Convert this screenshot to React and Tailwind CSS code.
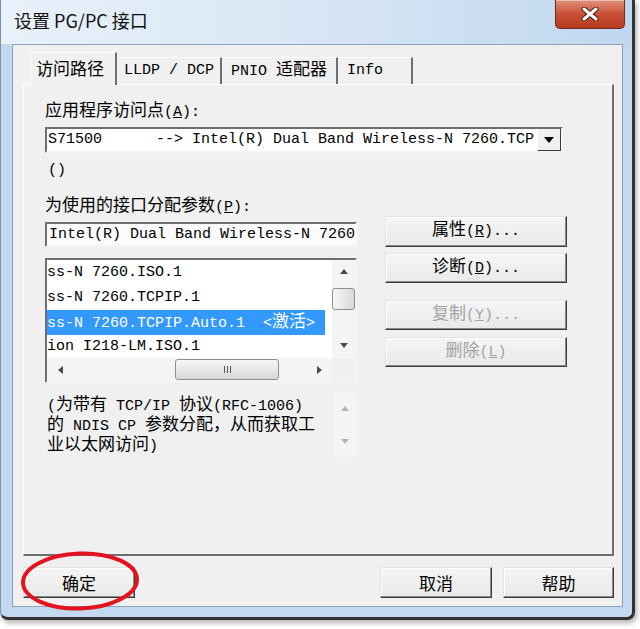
import React from "react";

const MONO = "font-['Liberation_Mono','Noto_Sans_CJK_SC',monospace]";
const CJKF = "font-['Noto_Sans_CJK_SC',sans-serif]";

function M({ s }) {
  const parts = s.split(/([\u2E80-\u9FFF\u3000-\u303F\uFF00-\uFFEF]+)/);
  return (
    <span className="whitespace-pre">
      {parts.map((p, i) =>
        i % 2 ? (
          <span key={i} className="text-[17px]">
            {p}
          </span>
        ) : (
          <span key={i}>{p}</span>
        )
      )}
    </span>
  );
}

const Up = ({ c = "#4a4a4a" }) => (
  <svg width="8" height="5" viewBox="0 0 8 5">
    <path d="M0 5 L4 0 L8 5Z" fill={c} />
  </svg>
);
const Down = ({ c = "#4a4a4a" }) => (
  <svg width="8" height="5" viewBox="0 0 8 5">
    <path d="M0 0 L8 0 L4 5Z" fill={c} />
  </svg>
);
const Left = ({ c = "#4a4a4a" }) => (
  <svg width="5" height="8" viewBox="0 0 5 8">
    <path d="M5 0 L0 4 L5 8Z" fill={c} />
  </svg>
);
const Right = ({ c = "#4a4a4a" }) => (
  <svg width="5" height="8" viewBox="0 0 5 8">
    <path d="M0 0 L5 4 L0 8Z" fill={c} />
  </svg>
);

function Btn({ children, className = "", dim = false }) {
  return (
    <div
      className={
        "flex items-center justify-center border border-t-[#e2e2e2] border-l-[#e2e2e2] border-r-[#3c3c3c] border-b-[#3c3c3c] shadow-[inset_-1px_-1px_0_#8a8a8a,inset_1px_1px_0_#ffffff] bg-gradient-to-b from-[#f5f5f5] to-[#e9e9e9] " +
        (dim ? "text-[#a3a3a3] " : "text-black ") +
        className
      }
    >
      {children}
    </div>
  );
}

export default function App() {
  return (
    <div className="w-[640px] h-[629px] bg-white relative overflow-hidden">
      <div className="w-[635px] h-[620px] flex flex-col bg-[#c3d9f0] border-l border-l-[#7f91a5] border-r-[3px] border-b-[3px] border-r-[#333333] border-b-[#333333] rounded-b-[8px] shadow-[2px_3px_5px_rgba(0,0,0,0.3)]">
        {/* Title bar */}
        <div className="h-[44px] flex items-start bg-gradient-to-r from-[#e9f1fa] via-[#d7e6f5] to-[#c1d7ef]">
          <div className={"pl-[13px] pt-[8px] text-[18px] leading-[24px] text-[#111] " + CJKF}>
            设置 PG/PC 接口
          </div>
          <div className="ml-auto mr-[7px] w-[70px] h-[29px] rounded-b-[5px] border border-t-0 border-[#6b2b1d] bg-gradient-to-b from-[#e0937e] via-[#c84f33] to-[#b83a20] shadow-[inset_0_1px_0_rgba(255,255,255,0.4)] flex items-center justify-center">
            <svg width="18" height="14" viewBox="0 0 18 14">
              <path d="M3 2 L15 12 M15 2 L3 12" stroke="#4b1a10" strokeWidth="5" strokeLinecap="round" />
              <path d="M3 2 L15 12 M15 2 L3 12" stroke="#ffffff" strokeWidth="3" strokeLinecap="round" />
            </svg>
          </div>
        </div>

        {/* Client */}
        <div className="h-[563px] ml-[11px] mr-[9px] border border-[#8ea2b7] bg-[#f0f0f0] flex flex-col">
          {/* Tab control */}
          <div className="mt-[7px] ml-[10px] mr-[8px] flex flex-col">
            <div className="h-[32px] pl-[7px] flex items-end">
              <div
                className={
                  "relative z-10 -mb-px w-[87px] h-[33px] bg-[#f0f0f0] border-t border-l border-t-white border-l-white border-r-2 border-r-[#6e6e6e] flex items-center pl-[5px] pb-[2px] text-[17px] text-black " +
                  CJKF
                }
              >
                访问路径
              </div>
              <div className={"w-[105px] h-[27px] border-t border-t-[#fafafa] border-r-2 border-r-[#6e6e6e] flex items-center pl-[7px] text-[15px] text-black " + MONO}>
                <span className="whitespace-pre">LLDP / DCP</span>
              </div>
              <div className={"w-[116px] h-[27px] border-t border-t-[#fafafa] border-r-2 border-r-[#6e6e6e] flex items-center pl-[9px] text-[15px] text-black " + MONO}>
                <M s="PNIO 适配器" />
              </div>
              <div className={"w-[75px] h-[27px] border-t border-t-[#fafafa] border-r-2 border-r-[#6e6e6e] flex items-center pl-[9px] text-[15px] text-black " + MONO}>
                Info
              </div>
            </div>

            {/* Panel */}
            <div className={"h-[472px] border-t border-l border-t-white border-l-white border-r-2 border-b-2 border-r-[#6e6e6e] border-b-[#6e6e6e] pl-[21px] pt-[17px] text-[15px] text-black flex flex-col " + MONO}>
              <div className="h-[20px] leading-[20px]">
                <M s="应用程序访问点" />(<u>A</u>):
              </div>
              {/* combo */}
              <div className="mt-[5px] w-[518px] h-[26px] border-2 border-t-[#6e6e6e] border-l-[#6e6e6e] border-r-[#f6f6f6] border-b-[#f6f6f6] bg-white flex">
                <div className="flex-1 pl-[1px] leading-[22px] whitespace-pre overflow-hidden">
                  {"S71500      --> Intel(R) Dual Band Wireless-N 7260.TCP"}
                </div>
                <div className="w-[24px] h-[22px] bg-[#f0f0f0] border-l border-l-white border-r border-b border-r-[#3c3c3c] border-b-[#3c3c3c] flex items-center justify-center">
                  <svg width="10" height="6" viewBox="0 0 10 6">
                    <path d="M0 0 L10 0 L5 6Z" fill="#000" />
                  </svg>
                </div>
              </div>
              <div className="mt-[8px] h-[20px] leading-[20px] pl-[3px]">()</div>

              <div className="mt-[16px] flex">
                {/* left column */}
                <div className="w-[312px] flex flex-col">
                  <div className="h-[20px] leading-[20px]">
                    <M s="为使用的接口分配参数" />(<u>P</u>):
                  </div>
                  <div className="mt-[5px] w-[312px] h-[25px] border-2 border-t-[#6e6e6e] border-l-[#6e6e6e] border-r-[#fdfdfd] border-b-[#f3f3f3] bg-[#fbfbfb] pl-[2px] leading-[21px] whitespace-pre overflow-hidden">
                    Intel(R) Dual Band Wireless-N 7260
                  </div>
                  {/* list box */}
                  <div className="mt-[11px] w-[312px] h-[125px] border-2 border-t-[#6e6e6e] border-l-[#6e6e6e] border-r-[#f3f3f3] border-b-[#f3f3f3] bg-white flex flex-col">
                    <div className="h-[98px] flex">
                      <div className="w-[285px] h-[98px] overflow-hidden flex flex-col">
                        <div className="h-[25px] shrink-0 leading-[25px] whitespace-pre">ss-N 7260.ISO.1</div>
                        <div className="h-[25px] shrink-0 leading-[25px] whitespace-pre">ss-N 7260.TCPIP.1</div>
                        <div className="h-[25px] shrink-0 w-[278px] bg-[#3399ff] text-white leading-[25px] whitespace-pre">
                          <M s="ss-N 7260.TCPIP.Auto.1  <激活>" />
                        </div>
                        <div className="h-[23px] shrink-0 leading-[23px] whitespace-pre">ion I218-LM.ISO.1</div>
                      </div>
                      <div className="w-[23px] h-[98px] bg-[#f4f4f4] flex flex-col items-center">
                        <div className="h-[22px] flex items-center justify-center">
                          <Up />
                        </div>
                        <div className="mt-[6px] w-[23px] h-[22px] rounded-[3px] border border-[#8f8f8f] bg-gradient-to-r from-[#f7f7f7] to-[#d8d8d8]" />
                        <div className="flex-1" />
                        <div className="h-[26px] flex items-center justify-center">
                          <Down />
                        </div>
                      </div>
                    </div>
                    <div className="h-[23px] flex">
                      <div className="w-[285px] h-[23px] bg-[#f4f4f4] flex items-center">
                        <div className="w-[26px] flex justify-center">
                          <Left />
                        </div>
                        <div className="ml-[102px] w-[104px] h-[21px] rounded-[3px] border border-[#8f8f8f] bg-gradient-to-b from-[#f7f7f7] to-[#d8d8d8] flex items-center justify-center gap-[2px]">
                          <div className="w-px h-[7px] bg-[#555]" />
                          <div className="w-px h-[7px] bg-[#555]" />
                          <div className="w-px h-[7px] bg-[#555]" />
                        </div>
                        <div className="flex-1 flex justify-end pr-[10px]">
                          <Right />
                        </div>
                      </div>
                      <div className="w-[23px] h-[23px] bg-[#f0f0f0]" />
                    </div>
                  </div>
                </div>

                {/* right column buttons */}
                <div className="ml-[28px] pt-[19px] flex flex-col">
                  <Btn className="w-[182px] h-[31px]">
                    <span className="leading-[20px]">
                      <M s="属性" />(<u>R</u>)...
                    </span>
                  </Btn>
                  <Btn className="mt-[6px] w-[182px] h-[30px]">
                    <span className="leading-[20px]">
                      <M s="诊断" />(<u>D</u>)...
                    </span>
                  </Btn>
                  <Btn className="mt-[17px] w-[182px] h-[30px]" dim>
                    <span className="leading-[20px]">
                      <M s="复制" />(<u>Y</u>)...
                    </span>
                  </Btn>
                  <Btn className="mt-[7px] w-[182px] h-[30px]" dim>
                    <span className="leading-[20px]">
                      <M s="删除" />(<u>L</u>)
                    </span>
                  </Btn>
                </div>
              </div>

              {/* description */}
              <div className="mt-[10px] h-[64px] flex">
                <div className="w-[288px] pl-[2px] pt-[3px] leading-[19px] whitespace-pre">
                  <div>
                    <M s="(为带有 TCP/IP 协议(RFC-1006)" />
                  </div>
                  <div>
                    <M s="的 NDIS CP 参数分配，从而获取工" />
                  </div>
                  <div>
                    <M s="业以太网访问)" />
                  </div>
                </div>
                <div className="w-[23px] h-[64px] bg-[#f5f5f5] flex flex-col items-center justify-between py-[13px]">
                  <Up c="#b4b4b4" />
                  <Down c="#b4b4b4" />
                </div>
              </div>
            </div>
          </div>

          {/* bottom buttons */}
          <div className={"mt-[11px] ml-[10px] mr-[8px] flex text-[17px] " + CJKF}>
            <Btn className="w-[112px] h-[31px]">确定</Btn>
            <Btn className="ml-auto w-[112px] h-[31px]">取消</Btn>
            <Btn className="ml-[11px] w-[111px] h-[31px]">帮助</Btn>
          </div>
        </div>
      </div>

      {/* red annotation ellipse */}
      <svg className="absolute left-[18px] top-[549px]" width="126" height="66" viewBox="0 0 126 66">
        <ellipse cx="62" cy="32" rx="57" ry="27.5" fill="none" stroke="#e3141f" strokeWidth="4" transform="rotate(-2 62 32)" />
      </svg>
    </div>
  );
}
